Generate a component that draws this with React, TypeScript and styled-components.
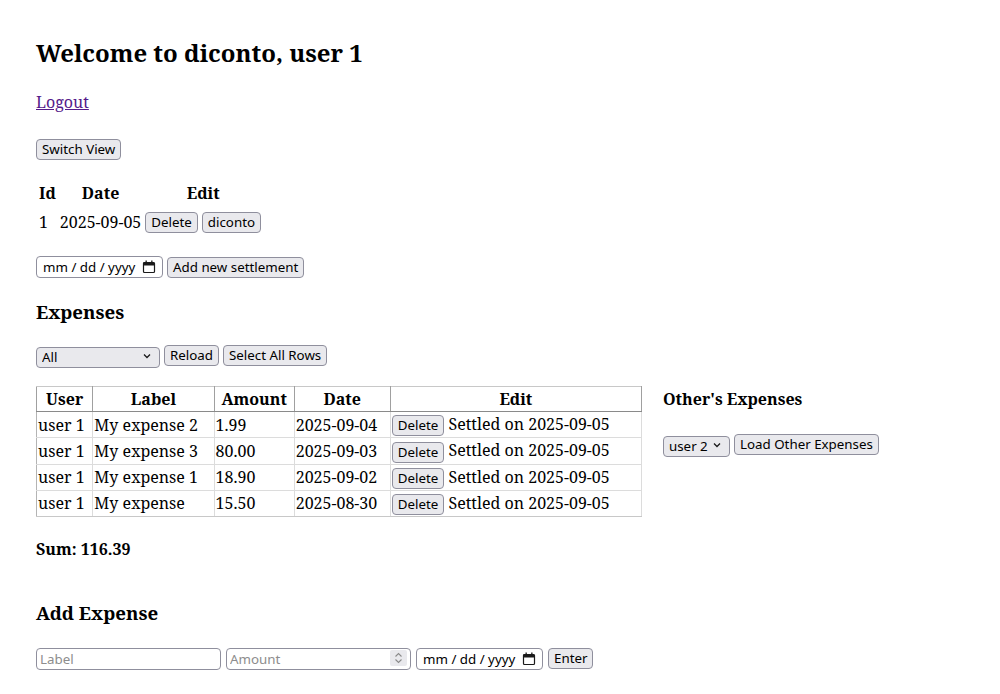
import React from "react";
import styled, { createGlobalStyle } from "styled-components";

const Global = createGlobalStyle`
  html, body { margin: 0; padding: 0; background: #fff; }
  body { font-family: "Noto Serif", "DejaVu Serif", serif; font-size: 16px; color: #000; }
  * { box-sizing: border-box; }
`;

const controlFont = `font-family: "Noto Sans", "DejaVu Sans", sans-serif; font-size: 13.33px;`;

const Page = styled.div`
  padding: 36px 36px 40px 36px;
`;

const Title = styled.h1`
  font-size: 24px;
  line-height: 33px;
  margin: 0;
`;

const Para = styled.p<{ $top: number }>`
  margin: ${(p) => p.$top}px 0 0 0;
  line-height: 22px;
`;

const Link = styled.a`
  color: #551a8b;
  text-decoration: underline;
`;

const SectionTitle = styled.h2<{ $top: number }>`
  font-size: 18.72px;
  line-height: 26px;
  margin: ${(p) => p.$top}px 0 0 0;
`;

const SideTitle = styled.h3`
  font-size: 16px;
  line-height: 22px;
  margin: 2px 0 0 0;
`;

const Row = styled.div<{ $top: number; $gap?: number }>`
  display: flex;
  align-items: center;
  gap: ${(p) => p.$gap ?? 4}px;
  margin-top: ${(p) => p.$top}px;
`;

const Button = styled.button`
  ${controlFont}
  color: #000;
  background: #e9e9ed;
  border: 1px solid #8f8f9d;
  border-radius: 4px;
  padding: 0 5px;
  height: 21px;
  line-height: 19px;
  vertical-align: middle;
`;

const SimpleTable = styled.table`
  margin-top: 19px;
  border-spacing: 2px;
`;

const Th = styled.th`
  padding: 1px;
  line-height: 22px;
`;

const Td = styled.td`
  padding: 3px 1px 1px 1px;
  line-height: 22px;
  white-space: nowrap;
`;

const Split = styled.div`
  display: flex;
  align-items: flex-start;
  gap: 21px;
  margin-top: 20px;
`;

const DataTable = styled.table`
  border-collapse: collapse;
  border: 1px solid #c8c8c8;
  width: 606px;
`;

const HeadCell = styled.th`
  border: 1px solid #a0a0a0;
  border-top-color: #c8c8c8;
  border-bottom-color: #8a8a8a;
  padding: 1px 2px;
  line-height: 22px;
`;

const Cell = styled.td<{ $last?: boolean }>`
  border: 1px solid #dcdcdc;
  border-left-color: #b4b4b4;
  border-bottom-color: ${(p) => (p.$last ? "#c8c8c8" : "#dcdcdc")};
  padding: 1px 1px;
  height: 26px;
  line-height: 22px;
  white-space: nowrap;
`;

const Side = styled.div`
  display: flex;
  flex-direction: column;
`;

const Sum = styled.p`
  font-weight: bold;
  line-height: 22px;
  margin: 21px 0 0 0;
`;

const SelectWrap = styled.span<{ $w: number }>`
  position: relative;
  display: inline-block;
  width: ${(p) => p.$w}px;
  height: 21px;
`;

const Select = styled.select`
  ${controlFont}
  appearance: none;
  -webkit-appearance: none;
  width: 100%;
  height: 100%;
  color: #000;
  background: #e9e9ed;
  border: 1px solid #8f8f9d;
  border-radius: 4px;
  padding: 0 20px 0 5px;
  line-height: 19px;
`;

const Chevron = styled.svg`
  position: absolute;
  right: 9px;
  top: 8px;
  width: 8px;
  height: 6px;
  pointer-events: none;
`;

const Field = styled.label<{ $w: number }>`
  ${controlFont}
  display: inline-flex;
  align-items: center;
  justify-content: space-between;
  width: ${(p) => p.$w}px;
  height: 22px;
  padding: 0 6px 0 6px;
  border: 1px solid #8f8f9d;
  border-radius: 4px;
  background: #fff;
  color: #000;
`;

const FieldText = styled.span`
  white-space: pre;
`;

const TextInput = styled.input<{ $w: number }>`
  ${controlFont}
  width: ${(p) => p.$w}px;
  height: 22px;
  padding: 0 3px;
  border: 1px solid #8f8f9d;
  border-radius: 4px;
  background: #fff;
  &::placeholder { color: #8d8d8d; }
`;

const NumberWrap = styled.span`
  position: relative;
  display: inline-block;
`;

const Spin = styled.span`
  position: absolute;
  right: 4px;
  top: 3px;
  width: 17px;
  height: 16px;
  background: #e9e9ed;
  border-radius: 2px;
  display: flex;
  align-items: center;
  justify-content: center;
  pointer-events: none;
`;

function ChevronIcon() {
  return (
    <Chevron viewBox="0 0 8 6">
      <path d="M1 1.5 L4 4.5 L7 1.5" fill="none" stroke="#1a1a1a" strokeWidth="1.3" />
    </Chevron>
  );
}

function CalendarIcon() {
  return (
    <svg width="14" height="14" viewBox="0 0 14 14">
      <rect x="1.5" y="2.5" width="11" height="10" rx="1" fill="none" stroke="#1a1a1a" strokeWidth="1.2" />
      <rect x="1.5" y="2.5" width="11" height="3" fill="#1a1a1a" />
      <rect x="3.5" y="0.5" width="1.3" height="3" fill="#1a1a1a" />
      <rect x="9.2" y="0.5" width="1.3" height="3" fill="#1a1a1a" />
    </svg>
  );
}

function DateField() {
  return (
    <Field $w={127}>
      <FieldText>mm / dd / yyyy</FieldText>
      <CalendarIcon />
    </Field>
  );
}

export default function App() {
  const expenses = [
    ["user 1", "My expense 2", "1.99", "2025-09-04"],
    ["user 1", "My expense 3", "80.00", "2025-09-03"],
    ["user 1", "My expense 1", "18.90", "2025-09-02"],
    ["user 1", "My expense", "15.50", "2025-08-30"],
  ];
  return (
    <Page>
      <Global />
      <Title>Welcome to diconto, user 1</Title>
      <Para $top={22}>
        <Link href="#">Logout</Link>
      </Para>
      <Row $top={26}>
        <Button>Switch View</Button>
      </Row>
      <SimpleTable>
        <thead>
          <tr>
            <Th>Id</Th>
            <Th>Date</Th>
            <Th colSpan={2}>Edit</Th>
          </tr>
        </thead>
        <tbody>
          <tr>
            <Td>1</Td>
            <Td>2025-09-05</Td>
            <Td>
              <Button>Delete</Button>
            </Td>
            <Td>
              <Button>diconto</Button>
            </Td>
          </tr>
        </tbody>
      </SimpleTable>
      <Row $top={20}>
        <DateField />
        <Button>Add new settlement</Button>
      </Row>
      <SectionTitle $top={21}>Expenses</SectionTitle>
      <Row $top={20}>
        <SelectWrap $w={124}>
          <Select defaultValue="All">
            <option>All</option>
          </Select>
          <ChevronIcon />
        </SelectWrap>
        <Button>Reload</Button>
        <Button>Select All Rows</Button>
      </Row>
      <Split>
        <DataTable>
          <thead>
            <tr>
              <HeadCell>User</HeadCell>
              <HeadCell>Label</HeadCell>
              <HeadCell>Amount</HeadCell>
              <HeadCell>Date</HeadCell>
              <HeadCell>Edit</HeadCell>
            </tr>
          </thead>
          <tbody>
            {expenses.map((e, i) => {
              const last = i === expenses.length - 1;
              return (
                <tr key={i}>
                  <Cell $last={last}>{e[0]}</Cell>
                  <Cell $last={last}>{e[1]}</Cell>
                  <Cell $last={last}>{e[2]}</Cell>
                  <Cell $last={last}>{e[3]}</Cell>
                  <Cell $last={last}>
                    <Button>Delete</Button> Settled on 2025-09-05
                  </Cell>
                </tr>
              );
            })}
          </tbody>
        </DataTable>
        <Side>
          <SideTitle>Other's Expenses</SideTitle>
          <Row $top={24}>
            <SelectWrap $w={67}>
              <Select defaultValue="user 2">
                <option>user 2</option>
              </Select>
              <ChevronIcon />
            </SelectWrap>
            <Button>Load Other Expenses</Button>
          </Row>
        </Side>
      </Split>
      <Sum>Sum: 116.39</Sum>
      <SectionTitle $top={40}>Add Expense</SectionTitle>
      <Row $top={21} $gap={5}>
        <TextInput $w={185} type="text" placeholder="Label" />
        <NumberWrap>
          <TextInput $w={185} type="text" placeholder="Amount" />
          <Spin>
            <svg width="9" height="12" viewBox="0 0 9 12">
              <path d="M1.5 4.5 L4.5 1.5 L7.5 4.5 M1.5 7.5 L4.5 10.5 L7.5 7.5" fill="none" stroke="#8a8a8a" strokeWidth="1.1" />
            </svg>
          </Spin>
        </NumberWrap>
        <DateField />
        <Button>Enter</Button>
      </Row>
    </Page>
  );
}
